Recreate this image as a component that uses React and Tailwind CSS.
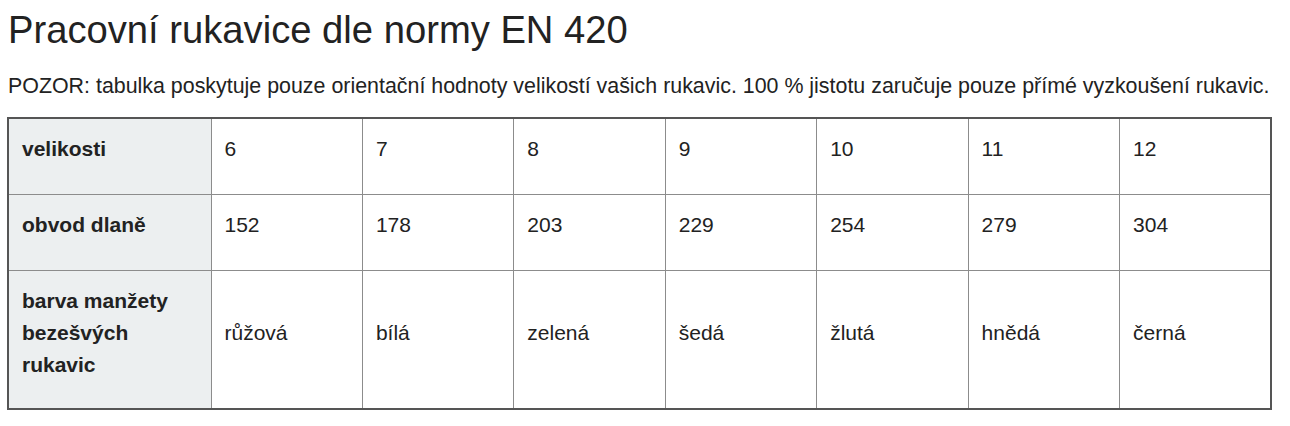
import React from "react";

const rows = [
  { head: "velikosti", vals: ["6", "7", "8", "9", "10", "11", "12"], pb: "pb-[29px]" },
  { head: "obvod dlaně", vals: ["152", "178", "203", "229", "254", "279", "304"], pb: "pb-[29px]" },
  {
    head: (
      <>
        barva manžety
        <br />
        bezešvých
        <br />
        rukavic
      </>
    ),
    vals: ["růžová", "bílá", "zelená", "šedá", "žlutá", "hnědá", "černá"],
    pb: "pb-[27px]",
  },
];

export default function App() {
  return (
    <div
      className="bg-white text-[#222] px-[8px] pt-[8px]"
      style={{ fontFamily: '"Liberation Sans", Arial, sans-serif' }}
    >
      <h1 className="text-[38.2px] leading-[44px] font-normal m-0">
        Pracovní rukavice dle normy EN 420
      </h1>
      <p className="text-[21.4px] leading-[28px] mt-[20px] mb-[17px] whitespace-nowrap">
        POZOR: tabulka poskytuje pouze orientační hodnoty velikostí vašich rukavic. 100 % jistotu zaručuje pouze přímé vyzkoušení rukavic.
      </p>
      <table className="border-collapse border-2 border-[#555] ml-[-1px] w-[1265px] table-fixed">
        <colgroup>
          <col className="w-[203px]" />
          {Array.from({ length: 7 }).map((_, i) => (
            <col key={i} />
          ))}
        </colgroup>
        <tbody>
          {rows.map((r, i) => (
            <tr key={i}>
              <th
                className={`bg-[#eceff0] border border-[#8c8c8c] text-left align-middle font-bold text-[21px] leading-[32px] pl-[13px] pr-[8px] pt-[14px] ${r.pb}`}
              >
                {r.head}
              </th>
              {r.vals.map((v, j) => (
                <td
                  key={j}
                  className={`border border-[#8c8c8c] align-middle text-[21px] leading-[32px] pl-[13px] pr-[8px] pt-[14px] ${r.pb}`}
                >
                  {v}
                </td>
              ))}
            </tr>
          ))}
        </tbody>
      </table>
    </div>
  );
}
